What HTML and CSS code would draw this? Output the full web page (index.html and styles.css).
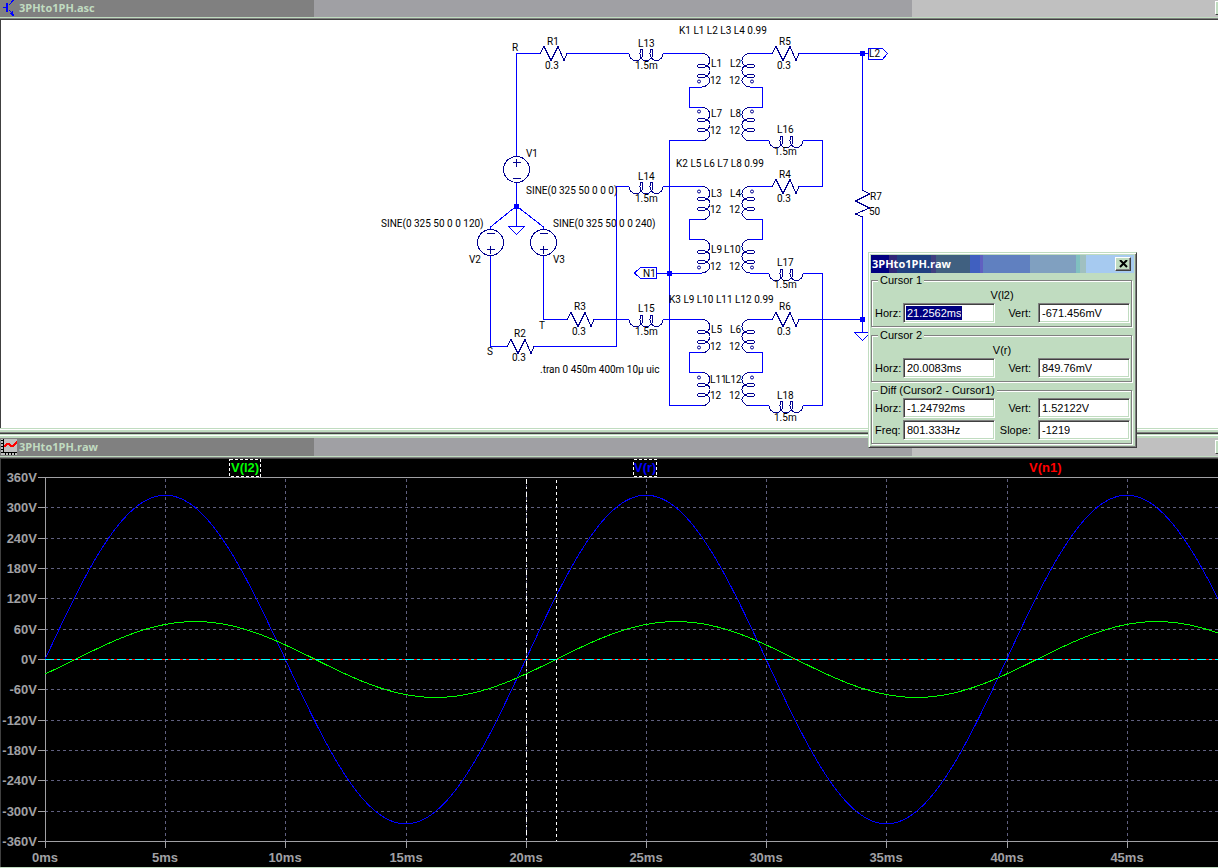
FILE: index.html
```html
<!DOCTYPE html>
<html lang="en">
<head>
<meta charset="utf-8">
<title>3PHto1PH</title>
<link rel="stylesheet" href="styles.css">
</head>
<body>
<main class="desk">
  <section class="window">
    <header class="titlebar">
      <svg class="title-icon" width="16" height="16" viewBox="0 0 16 16" aria-hidden="true" shape-rendering="crispEdges">
        <path class="transistor" d="M1 7.500H5M7 5L11.500 0M7 10L11 14"/>
        <path class="transistor-body" d="M4 3h2v9H4zM8 13l3-2 1 5h-2z"/>
      </svg>
      <h1 class="title">3PHto1PH.asc</h1>
      <button class="caption-button" type="button" aria-label="Minimize schematic"></button>
    </header>
    <div class="client">
      <svg class="schematic" role="img" aria-label="Three phase to single phase circuit">
        <defs>
          <path id="coil" d="M0 0C0 4 3 7 7 7C11 7 14 4 14 0C14 -3 13.500 -4.500 12.500 -4.500C11.500 -4.500 11 -3 11 0C11 4 13 7 17 7C21 7 24 4 24 0C24 -3 23.500 -4.500 22.500 -4.500C21.500 -4.500 21 -3 21 0C21 4 24 7 27 7C31 7 34 4 34 0"/>
          <path id="coilv" d="M0 0C4 0 8 3 8 7C8 11 4 14 0 14C-3 14 -4.500 13.500 -4.500 12.500C-4.500 11.500 -3 11 0 11C4 11 8 13 8 17C8 21 4 24 0 24C-3 24 -4.500 23.500 -4.500 22.500C-4.500 21.500 -3 21 0 21C4 21 8 24 8 27C8 30 4 33.500 0 33.500"/>
          <path id="res" d="M0 0L4 -7L11 7L18 -7L24 7L27 0"/>
          <g id="source"><circle r="13"/><path d="M-4 -7H4M0 -11V-3M-4 9H4"/></g>
        </defs>
        <g transform="translate(0,-20)">
          <g class="wire">
            <path d="M516.500 156V53.500H540M567 53.500H629M663 53.500H702M516.500 182V226.500M516.500 206L490.500 227V230M516.500 206L543.500 227V230M490.500 255V346.500H507M534 346.500H616.500V186.500H629M543.500 255V319.500H567M594 319.500H629M663 319.500H702M663 186.500H702"/>
            <path d="M702 140.500H669.500V405.500H702M657 273.500H702M702 87.500H689.500V107.500H702M702 219.500H689.500V239.500H702M702 352.500H689.500V372.500H702M750 87.500H762.500V107.500H750M750 219.500H762.500V239.500H750M750 352.500H762.500V372.500H750"/>
            <path d="M750 53.500H772M799 53.500H868M750 140.500H769M803 140.500H822.500V186.500H799M750 186.500H772M750 273.500H769M803 273.500H822.500V405.500H803M750 405.500H769M750 319.500H772M799 319.500H862M862.500 53.500V190M862.500 217V332"/>
            <path d="M508.500 226.500H524.500L516.500 234.500ZM854.500 332.500H870.500L862.500 340.500ZM640.500 267.500H656.500V278.500H640.500L634.500 273ZM868.500 48.500H882.500L887.500 53.500L882.500 59.500H868.500Z"/>
            <path class="node" d="M514 204h5v5h-5zM667 271h5v5h-5zM860 51h5v5h-5zM860 317h5v5h-5z"/>
          </g>
          <g class="part">
            <use href="#res" x="540" y="53.500"/><use href="#res" x="772" y="53.500"/><use href="#res" x="772" y="186.500"/><use href="#res" x="772" y="319.500"/><use href="#res" x="567" y="319.500"/><use href="#res" x="507" y="346.500"/>
            <use href="#res" transform="matrix(0,1,-1,0,862.500,190)"/>
            <use href="#coil" x="629" y="53.500"/><use href="#coil" x="629" y="186.500"/><use href="#coil" x="629" y="319.500"/><use href="#coil" x="769" y="140.500"/><use href="#coil" x="769" y="273.500"/><use href="#coil" x="769" y="405.500"/>
            <use href="#coilv" x="702" y="53.500"/><use href="#coilv" x="702" y="107.500"/><use href="#coilv" x="702" y="186.500"/><use href="#coilv" x="702" y="239.500"/><use href="#coilv" x="702" y="319.500"/><use href="#coilv" x="702" y="372.500"/>
            <g transform="matrix(-1,0,0,1,750,0)"><use href="#coilv" y="53.500"/><use href="#coilv" y="107.500"/><use href="#coilv" y="186.500"/><use href="#coilv" y="239.500"/><use href="#coilv" y="319.500"/><use href="#coilv" y="372.500"/></g>
            <use href="#source" x="516.500" y="169.500"/>
            <use href="#source" transform="translate(490.500,242.500) scale(1,-1)"/>
            <use href="#source" transform="translate(543.500,242.500) scale(1,-1)"/>
            <g class="dots">
              <circle cx="699" cy="81.500" r="1.500"/><circle cx="752" cy="81.500" r="1.500"/>
              <circle cx="699" cy="111.500" r="1.500"/><circle cx="752" cy="111.500" r="1.500"/>
              <circle cx="699" cy="191.500" r="1.500"/><circle cx="752" cy="191.500" r="1.500"/>
              <circle cx="699" cy="267.500" r="1.500"/><circle cx="752" cy="267.500" r="1.500"/>
              <circle cx="699" cy="347.500" r="1.500"/><circle cx="752" cy="347.500" r="1.500"/>
              <circle cx="699" cy="377.500" r="1.500"/><circle cx="752" cy="377.500" r="1.500"/>
            </g>
          </g>
          <g class="note">
            <text x="512" y="51">R</text><text x="547" y="45">R1</text><text x="545" y="69">0.3</text>
            <text x="638" y="47">L13</text><text x="635" y="69">1.5m</text>
            <text x="679" y="34">K1 L1 L2 L3 L4 0.99</text>
            <text x="779" y="45">R5</text><text x="777" y="69">0.3</text><text x="869" y="57">L2</text>
            <text x="711" y="67">L1</text><text x="730" y="67">L2</text><text x="710" y="84">12</text><text x="729" y="84">12</text>
            <text x="711" y="117">L7</text><text x="730" y="117">L8</text><text x="710" y="134">12</text><text x="729" y="134">12</text>
            <text x="777" y="133">L16</text><text x="774" y="155">1.5m</text>
            <text x="526" y="157">V1</text><text x="526" y="194">SINE(0 325 50 0 0 0)</text>
            <text x="381" y="227">SINE(0 325 50 0 0 120)</text><text x="553" y="227">SINE(0 325 50 0 0 240)</text>
            <text x="469" y="263">V2</text><text x="553" y="263">V3</text>
            <text x="676" y="167">K2 L5 L6 L7 L8 0.99</text>
            <text x="638" y="180">L14</text><text x="635" y="202">1.5m</text>
            <text x="779" y="178">R4</text><text x="777" y="202">0.3</text>
            <text x="711" y="197">L3</text><text x="730" y="197">L4</text><text x="710" y="213">12</text><text x="729" y="213">12</text>
            <text x="711" y="253">L9</text><text x="724" y="253">L10</text><text x="710" y="270">12</text><text x="729" y="270">12</text>
            <text x="643" y="277">N1</text><text x="777" y="266">L17</text><text x="774" y="288">1.5m</text>
            <text x="870" y="200">R7</text><text x="869" y="215">50</text>
            <text x="669" y="303">K3 L9 L10 L11 L12 0.99</text>
            <text x="574" y="310">R3</text><text x="572" y="335">0.3</text><text x="539" y="329">T</text>
            <text x="638" y="312">L15</text><text x="635" y="335">1.5m</text>
            <text x="779" y="310">R6</text><text x="777" y="335">0.3</text>
            <text x="711" y="333">L5</text><text x="730" y="333">L6</text><text x="710" y="350">12</text><text x="729" y="350">12</text>
            <text x="710" y="383">L11</text><text x="725" y="383">L12</text><text x="710" y="399">12</text><text x="729" y="399">12</text>
            <text x="777" y="399">L18</text><text x="774" y="421">1.5m</text>
            <text x="487" y="355">S</text><text x="514" y="337">R2</text><text x="512" y="361">0.3</text>
            <text x="540" y="373">.tran 0 450m 400m 10µ uic</text>
          </g>
        </g>
      </svg>
    </div>
  </section>
  <div class="splitter"></div>
  <section class="window window-plot">
    <header class="titlebar">
      <svg class="title-icon" width="16" height="16" viewBox="0 0 16 16" aria-hidden="true" shape-rendering="crispEdges">
        <path fill="#c0c0c0" d="M0 0h16v16H0z"/>
        <path class="chart-axis" d="M2.500 0V14M2 13.500H16"/>
        <path class="chart-ticks" d="M1 1V14M4 15H16"/>
        <path class="chart-trace" d="M3 8L6 5H8L10 7H12L16 3"/>
      </svg>
      <h2 class="title">3PHto1PH.raw</h2>
      <button class="caption-button" type="button" aria-label="Minimize waveforms"></button>
    </header>
    <div class="client client-dark">
      <svg class="plot" role="img" aria-label="Waveforms V(l2), V(r) and V(n1)">
        <g id="plot" transform="translate(0,-459)"></g>
      </svg>
    </div>
  </section>

  <form class="dialog" aria-label="Cursor readout">
    <header class="dialog-title">
      <h2 class="dialog-name">3PHto1PH.raw</h2>
      <button class="close" type="button" aria-label="Close">
        <svg width="9" height="8" viewBox="0 0 9 8" aria-hidden="true"><path d="M1 0L8 7M8 0L1 7"/></svg>
      </button>
    </header>
    <fieldset class="group">
      <legend>Cursor 1</legend>
      <p class="trace">V(l2)</p>
      <div class="fields">
        <label for="h1">Horz:</label><div class="box"><input id="h1" class="selected" value="21.2562ms"></div>
        <label for="v1">Vert:</label><div class="box"><input id="v1" value="-671.456mV"></div>
      </div>
    </fieldset>
    <fieldset class="group">
      <legend>Cursor 2</legend>
      <p class="trace">V(r)</p>
      <div class="fields">
        <label for="h2">Horz:</label><div class="box"><input id="h2" value="20.0083ms"></div>
        <label for="v2">Vert:</label><div class="box"><input id="v2" value="849.76mV"></div>
      </div>
    </fieldset>
    <fieldset class="group">
      <legend>Diff (Cursor2 - Cursor1)</legend>
      <div class="fields">
        <label for="h3">Horz:</label><div class="box"><input id="h3" value="-1.24792ms"></div>
        <label for="v3">Vert:</label><div class="box"><input id="v3" value="1.52122V"></div>
        <label for="f3">Freq:</label><div class="box"><input id="f3" value="801.333Hz"></div>
        <label for="s3">Slope:</label><div class="box"><input id="s3" value="-1219"></div>
      </div>
    </fieldset>
  </form>
</main>
<script src="plot.js"></script>
</body>
</html>
```
FILE: styles.css
```css
* { box-sizing: border-box; }

body {
  margin: 0;
  background: #c0dcc0;
  font-family: Roboto, "Liberation Sans", sans-serif;
}

.desk {
  position: relative;
  display: flex;
  flex-direction: column;
  min-height: 100vh;
  overflow: hidden;
}

.titlebar {
  display: flex;
  align-items: flex-start;
  gap: 1px;
  height: 17px;
  padding-left: 2px;
  overflow: hidden;
  background: linear-gradient(to right, #808080 314px, #a0a0a4 314px, #a0a0a4 912px, #c0c0c0 912px);
}

.window-plot .titlebar { height: 18px; padding: 1px 0 0 1px; }
.window-plot .title-icon { margin-right: 1px; }

.title-icon { flex: none; }
.transistor { fill: none; stroke: #0000ff; }
.transistor-body { fill: #0000ff; }
.chart-axis { stroke: #000; fill: none; }
.chart-ticks { stroke: #000; stroke-width: 2; stroke-dasharray: 1 2; fill: none; }
.chart-trace { stroke: #ff0000; stroke-width: 2; fill: none; }

.title {
  flex: 1;
  margin: 0;
  font: bold 11px/16px "Open Sans", "Noto Sans", sans-serif;
  color: #c0dcc0;
}

.caption-button {
  flex: none;
  width: 16px;
  height: 14px;
  margin: 1px -13px 0 0;
  padding: 0;
  border: 1px solid;
  border-color: #fff #404040 #404040 #fff;
  background: #c0dcc0;
}

.client {
  border-top: 1px solid #404040;
  border-left: 1px solid #404040;
  background: #fff;
  box-shadow: 0 -1px 0 #808080;
  margin-top: 2px;
}

.client-dark { background: #000; }

.schematic, .plot {
  display: block;
  width: calc(100% + 1px);
  height: 408px;
  margin-left: -1px;
}

.wire { fill: none; stroke: #0000ff; shape-rendering: crispEdges; }
.wire .node { fill: #0000ff; stroke: none; }
.part { fill: none; stroke: #000090; shape-rendering: crispEdges; }
.dots { shape-rendering: auto; }
.note { font-size: 10px; fill: #000; }

.splitter {
  height: 10px;
  background: linear-gradient(#c0dcc0 1px, #fff 1px 2px, #c0dcc0 2px 4px, #808080 4px 5px, #404040 5px 6px, #c0dcc0 6px 7px, #fff 7px 8px, #c0dcc0 8px);
}

.axis { fill: none; stroke: #a0a0a4; shape-rendering: crispEdges; }
.grid { fill: none; stroke: #606080; stroke-dasharray: 3 3; shape-rendering: crispEdges; }
.curve { fill: none; shape-rendering: crispEdges; }
.curve-l2 { stroke: #00ff00; }
.curve-r { stroke: #0000ff; }
.curve-n1 { stroke: #ff0000; }
.cursor-zero { stroke: #00ffff; stroke-dasharray: 9 3 3 3; shape-rendering: crispEdges; }
.cursor { stroke: #fff; stroke-dasharray: 3 3; shape-rendering: crispEdges; }
.cursor-two { stroke-dasharray: 5 3 2 3; }
.scale, .name { font: bold 13px "Liberation Sans", sans-serif; }
.scale { fill: #a0a0a4; }
.name-l2 { fill: #00ff00; }
.name-r { fill: #0000ff; }
.name-n1 { fill: #ff0000; }
.name-box { fill: none; stroke: #fff; stroke-dasharray: 3 2; shape-rendering: crispEdges; }

.dialog {
  position: absolute;
  left: 868px;
  top: 252px;
  width: 269px;
  padding: 2px;
  border: 1px solid;
  border-color: #c0dcc0 #404040 #404040 #c0dcc0;
  box-shadow: inset 1px 1px 0 #fff, inset -1px -1px 0 #808080;
  background: #c0dcc0;
  font: 11px/14px "Liberation Sans", sans-serif;
  color: #000;
}

.dialog-title {
  display: flex;
  align-items: center;
  justify-content: space-between;
  height: 18px;
  margin-bottom: 1px;
  padding: 0 3px 0 1px;
  background: linear-gradient(to right, #000080 18px, #302878 18px 26px, #204080 26px 60px, #404080 60px 65px, #406080 65px 99px, #4060c0 99px 109px, #6060c0 109px 112px, #6080c0 112px 159px, #80a0c0 159px 205px, #80c0c0 205px 209px, #a0c0c0 209px 215px, #a6caf0 215px);
}

.dialog-name {
  margin: 0;
  font: bold 11px/16px "Open Sans", "Noto Sans", sans-serif;
  color: #fff;
}

.close {
  display: flex;
  align-items: center;
  justify-content: center;
  width: 16px;
  height: 14px;
  padding: 0;
  border: 1px solid;
  border-color: #fff #404040 #404040 #fff;
  box-shadow: inset -1px -1px 0 #808080;
  background: #c0dcc0;
}

.close path { stroke: #000; stroke-width: 2; fill: none; }

.group {
  min-width: 0;
  margin: 0 2px 2px 0;
  padding: 2px 2px 3px 3px;
  border: 1px solid #808080;
  box-shadow: 1px 1px 0 #fff, inset 1px 1px 0 #fff;
}

.group:last-child { margin-bottom: 1px; }

.group legend {
  margin-left: 3px;
  padding: 0 2px;
  line-height: 12px;
  background: #c0dcc0;
}

.trace {
  margin: 0 0 1px;
  text-align: center;
}

.fields {
  display: grid;
  grid-template-columns: 27px 92px 41px 92px;
  row-gap: 2px;
  align-items: center;
  column-gap: 1px;
}

.fields label:nth-of-type(even) { text-align: right; padding-right: 6px; }

.box {
  height: 20px;
  padding: 1px;
  border: 1px solid;
  border-color: #808080 #fff #fff #808080;
  background: #fff;
  box-shadow: inset 1px 1px 0 #404040, inset -1px -1px 0 #c0dcc0;
}

.box input {
  display: block;
  field-sizing: content;
  max-width: 100%;
  height: 14px;
  margin: 1px 0 0 1px;
  padding: 0 1px;
  border: 0;
  outline: 0;
  background: transparent;
  font: inherit;
  color: #000;
}

.box .selected { background: #000080; color: #fff; }
```
FILE: plot.js
```js
const root = document.getElementById("plot");
const NS = "http://www.w3.org/2000/svg";
const LEFT = 45, ZERO = 659, RIGHT = 4000;
const PX_PER_MS = 24.04, PX_PER_VOLT = 182 / 360;
const viewWidth = root.parentNode.getBoundingClientRect().width;

function add(tag, cls, attrs, text) {
  const el = document.createElementNS(NS, tag);
  el.setAttribute("class", cls);
  for (const key in attrs) el.setAttribute(key, attrs[key]);
  if (text) el.textContent = text;
  root.appendChild(el);
}

function path(cls, d) { add("path", cls, { d }); }

function sine(cls, volts, delayMs) {
  let d = "";
  for (let x = LEFT; x < RIGHT; x += 2) {
    const ms = (x - LEFT) / PX_PER_MS;
    const y = ZERO + 0.5 - volts * PX_PER_VOLT * Math.sin((ms - delayMs) * Math.PI / 10);
    d += (d ? "L" : "M") + x + " " + y.toFixed(2);
  }
  path("curve " + cls, d);
}

for (let v = 360; v >= -360; v -= 60) {
  const y = Math.round(ZERO - v * PX_PER_VOLT) + 0.5;
  if (Math.abs(v) < 360) path("grid", `M${LEFT} ${y}H${RIGHT}`);
  path("axis", `M38 ${y}H${LEFT}`);
  add("text", "scale", { x: 37, y: y + 4.5, "text-anchor": "end" }, v + "V");
}
for (let ms = 0; LEFT + ms * PX_PER_MS < viewWidth - 20; ms += 5) {
  const x = Math.round(LEFT + ms * PX_PER_MS) + 0.5;
  if (ms) path("grid", `M${x} 479V841`);
  path("axis", `M${x} 841V848`);
  add("text", "scale", { x: x - 0.5, y: 862, "text-anchor": "middle" }, ms + "ms");
}
path("axis", `M45.5 841.5V477.5H${RIGHT}M45 841.5H${RIGHT}`);

sine("curve-r", 325, 0);
sine("curve-l2", 75, 1.25);
path("curve curve-n1", `M${LEFT} 659.5H${RIGHT}`);
path("cursor-zero", `M${LEFT} 659.5H${RIGHT}`);
path("cursor cursor-two", "M526.5 479V841");
path("cursor", "M556.5 480V841");

add("text", "name name-l2", { x: 231, y: 472 }, "V(l2)");
add("text", "name name-r", { x: 634, y: 472 }, "V(r)");
add("text", "name name-n1", { x: 1029, y: 472 }, "V(n1)");
add("rect", "name-box", { x: 229.5, y: 459.5, width: 31, height: 17 });
add("rect", "name-box", { x: 633.5, y: 459.5, width: 23, height: 17 });
```
